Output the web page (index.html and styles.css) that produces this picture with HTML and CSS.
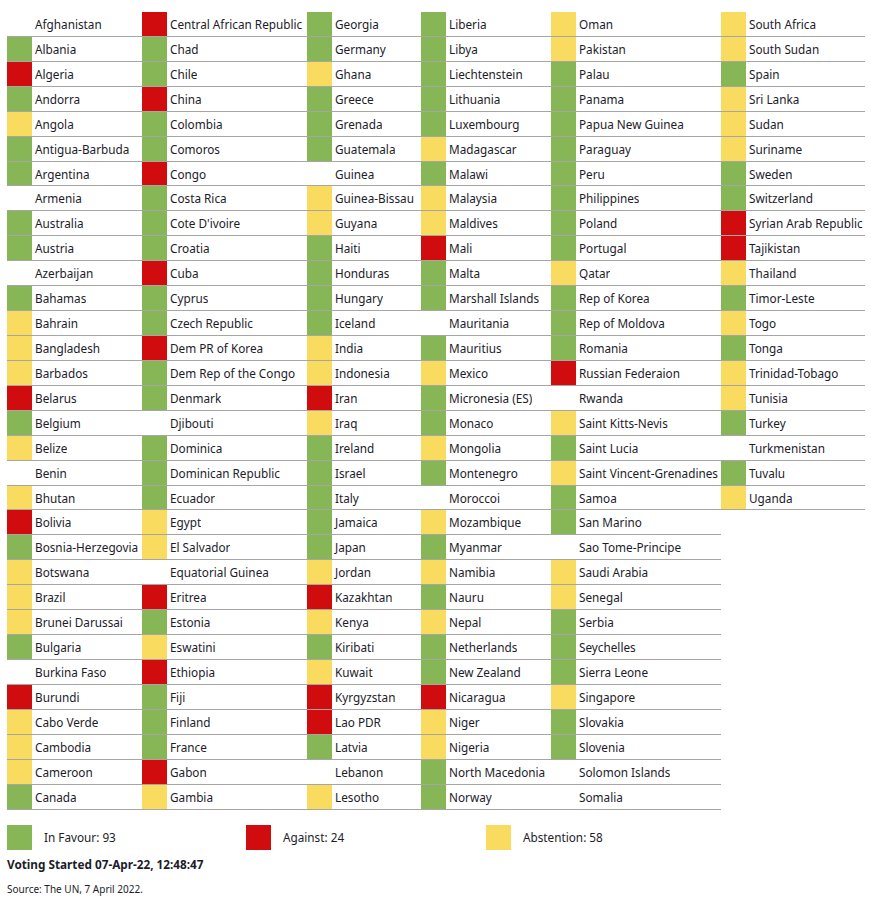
FILE: index.html
```html
<!DOCTYPE html>
<html lang="en">
<head>
<meta charset="utf-8">
<title>UN vote results</title>
<link rel="stylesheet" href="styles.css">
</head>
<body>
<div class="page">
  <div class="board" id="board"></div>
  <div class="legend">
    <div class="legend-item"><span class="sw g"></span><span>In Favour: 93</span></div>
    <div class="legend-item"><span class="sw r"></span><span>Against: 24</span></div>
    <div class="legend-item"><span class="sw y"></span><span>Abstention: 58</span></div>
  </div>
  <p class="started">Voting Started 07-Apr-22, 12:48:47</p>
  <p class="source">Source: The UN, 7 April 2022.</p>
</div>
<script src="app.js"></script>
</body>
</html>
```

FILE: app.js
```js
var cols = [
  ["c1", [
    ["Afghanistan","n"],["Albania","g"],["Algeria","r"],["Andorra","g"],["Angola","y"],["Antigua-Barbuda","g"],["Argentina","g"],["Armenia","n"],["Australia","g"],["Austria","g"],["Azerbaijan","n"],["Bahamas","g"],["Bahrain","y"],["Bangladesh","y"],["Barbados","y"],["Belarus","r"],["Belgium","g"],["Belize","y"],["Benin","n"],["Bhutan","y"],["Bolivia","r"],["Bosnia-Herzegovia","g"],["Botswana","y"],["Brazil","y"],["Brunei Darussai","y"],["Bulgaria","g"],["Burkina Faso","n"],["Burundi","r"],["Cabo Verde","y"],["Cambodia","y"],["Cameroon","y"],["Canada","g"]
  ]],
  ["c2", [
    ["Central African Republic","r"],["Chad","g"],["Chile","g"],["China","r"],["Colombia","g"],["Comoros","g"],["Congo","r"],["Costa Rica","g"],["Cote D'ivoire","g"],["Croatia","g"],["Cuba","r"],["Cyprus","g"],["Czech Republic","g"],["Dem PR of Korea","r"],["Dem Rep of the Congo","g"],["Denmark","g"],["Djibouti","n"],["Dominica","g"],["Dominican Republic","g"],["Ecuador","g"],["Egypt","y"],["El Salvador","y"],["Equatorial Guinea","n"],["Eritrea","r"],["Estonia","g"],["Eswatini","y"],["Ethiopia","r"],["Fiji","g"],["Finland","g"],["France","g"],["Gabon","r"],["Gambia","y"]
  ]],
  ["c3", [
    ["Georgia","g"],["Germany","g"],["Ghana","y"],["Greece","g"],["Grenada","g"],["Guatemala","g"],["Guinea","n"],["Guinea-Bissau","y"],["Guyana","y"],["Haiti","g"],["Honduras","g"],["Hungary","g"],["Iceland","g"],["India","y"],["Indonesia","y"],["Iran","r"],["Iraq","y"],["Ireland","g"],["Israel","g"],["Italy","g"],["Jamaica","g"],["Japan","g"],["Jordan","y"],["Kazakhtan","r"],["Kenya","y"],["Kiribati","g"],["Kuwait","y"],["Kyrgyzstan","r"],["Lao PDR","r"],["Latvia","g"],["Lebanon","n"],["Lesotho","y"]
  ]],
  ["c4", [
    ["Liberia","g"],["Libya","g"],["Liechtenstein","g"],["Lithuania","g"],["Luxembourg","g"],["Madagascar","y"],["Malawi","g"],["Malaysia","y"],["Maldives","y"],["Mali","r"],["Malta","g"],["Marshall Islands","g"],["Mauritania","n"],["Mauritius","g"],["Mexico","y"],["Micronesia (ES)","g"],["Monaco","g"],["Mongolia","y"],["Montenegro","g"],["Moroccoi","n"],["Mozambique","y"],["Myanmar","g"],["Namibia","y"],["Nauru","g"],["Nepal","y"],["Netherlands","g"],["New Zealand","g"],["Nicaragua","r"],["Niger","y"],["Nigeria","y"],["North Macedonia","g"],["Norway","g"]
  ]],
  ["c5", [
    ["Oman","y"],["Pakistan","y"],["Palau","g"],["Panama","g"],["Papua New Guinea","g"],["Paraguay","g"],["Peru","g"],["Philippines","g"],["Poland","g"],["Portugal","g"],["Qatar","y"],["Rep of Korea","g"],["Rep of Moldova","g"],["Romania","g"],["Russian Federaion","r"],["Rwanda","n"],["Saint Kitts-Nevis","y"],["Saint Lucia","g"],["Saint Vincent-Grenadines","y"],["Samoa","g"],["San Marino","g"],["Sao Tome-Principe","n"],["Saudi Arabia","y"],["Senegal","y"],["Serbia","g"],["Seychelles","g"],["Sierra Leone","g"],["Singapore","y"],["Slovakia","g"],["Slovenia","g"],["Solomon Islands","n"],["Somalia","n"]
  ]],
  ["c6", [
    ["South Africa","y"],["South Sudan","y"],["Spain","g"],["Sri Lanka","y"],["Sudan","y"],["Suriname","y"],["Sweden","g"],["Switzerland","g"],["Syrian Arab Republic","r"],["Tajikistan","r"],["Thailand","y"],["Timor-Leste","g"],["Togo","y"],["Tonga","g"],["Trinidad-Tobago","y"],["Tunisia","y"],["Turkey","g"],["Turkmenistan","n"],["Tuvalu","g"],["Uganda","y"]
  ]]
];
var board = document.getElementById("board");
cols.forEach(function (c) {
  var col = document.createElement("div");
  col.className = "col " + c[0];
  c[1].forEach(function (it) {
    var row = document.createElement("div");
    row.className = "row";
    var sw = document.createElement("span");
    sw.className = "cell " + it[1];
    var nm = document.createElement("span");
    nm.className = "name";
    nm.textContent = it[0];
    row.appendChild(sw);
    row.appendChild(nm);
    col.appendChild(row);
  });
  board.appendChild(col);
});
```

FILE: styles.css
```css
html, body {
  margin: 0;
  padding: 0;
  background: #ffffff;
}
body {
  font-family: "Noto Sans", "Open Sans", sans-serif;
  color: #1c1c2a;
  font-size: 11.75px;
}
.page {
  padding: 12px 6px 0 7px;
}
.board {
  display: flex;
  align-items: flex-start;
}
.col {
  display: flex;
  flex-direction: column;
  flex: none;
}
.c1 { width: 135px; }
.c2 { width: 165px; }
.c3 { width: 114px; }
.c4 { width: 130px; }
.c5 { width: 170px; }
.c6 { width: 144px; }
.row {
  display: flex;
  align-items: stretch;
  height: 24.93px;
  box-sizing: border-box;
  border-bottom: 1px solid #a6a6a6;
}
.cell {
  flex: none;
  width: 25px;
}
.name {
  padding-left: 3px;
  line-height: 25px;
  white-space: nowrap;
  overflow: hidden;
}
.g { background: #87b657; }
.r { background: #d00c0f; }
.y { background: #f9db5f; }
.n { background: transparent; }
.legend {
  display: grid;
  grid-template-columns: 239px 240px 200px;
  margin-top: 15px;
  height: 25px;
}
.legend-item {
  display: flex;
  align-items: center;
  gap: 12px;
}
.sw {
  width: 25px;
  height: 25px;
  flex: none;
}
.started {
  margin: 6px 0 0;
  font-weight: 700;
  font-size: 11.75px;
  line-height: 16px;
}
.source {
  margin: 10px 0 0;
  font-size: 10px;
  line-height: 14px;
}
```
